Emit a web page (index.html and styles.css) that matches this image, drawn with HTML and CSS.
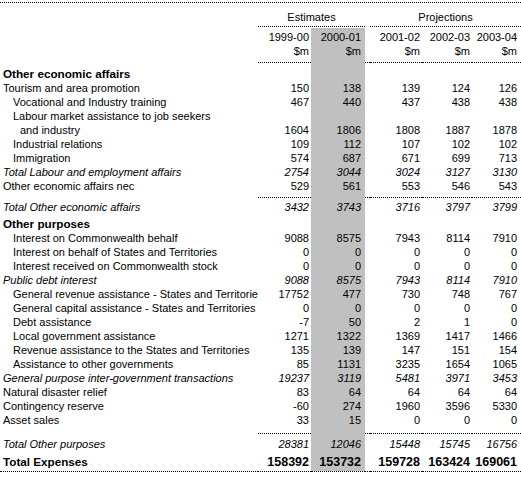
FILE: index.html
```html
<!DOCTYPE html>
<html lang="en">
<head>
    <meta charset="UTF-8">
    <title>Expenses - Other economic affairs and other purposes</title>
    <link rel="stylesheet" href="styles.css">
</head>
<body>

<div class="sheet">
    <table class="budget">
        <colgroup>
            <col class="c-label">
            <col class="c-1">
            <col class="c-2">
            <col class="c-sp">
            <col class="c-3">
            <col class="c-4">
            <col class="c-5">
        </colgroup>
        <thead>
            <tr class="group">
                <th class="label"></th>
                <th colspan="2" class="est">Estimates</th>
                <th class="sp"></th>
                <th colspan="3" class="proj">Projections</th>
            </tr>
            <tr class="years">
                <th class="label"></th>
                <th class="n1">1999-00</th>
                <th class="n2 hi">2000-01</th>
                <th class="sp"></th>
                <th class="n3">2001-02</th>
                <th class="n4">2002-03</th>
                <th class="n5">2003-04</th>
            </tr>
            <tr class="units">
                <th class="label"></th>
                <th class="n1">$m</th>
                <th class="n2 hi">$m</th>
                <th class="sp"></th>
                <th class="n3">$m</th>
                <th class="n4">$m</th>
                <th class="n5">$m</th>
            </tr>
        </thead>
        <tbody id="rows">
            <!-- rows are filled from the data below -->
        </tbody>
    </table>
</div>

<script>
    // type: head = bold section title, sub = italic subtotal, rule = dotted line above totals
    const rows = [
        { label: 'Other economic affairs', type: 'head first' },
        { label: 'Tourism and area promotion', values: [150, 138, 139, 124, 126] },
        { label: 'Vocational and Industry training', indent: 1, values: [467, 440, 437, 438, 438] },
        { label: 'Labour market assistance to job seekers', indent: 1 },
        { label: 'and industry', indent: 2, values: [1604, 1806, 1808, 1887, 1878] },
        { label: 'Industrial relations', indent: 1, values: [109, 112, 107, 102, 102] },
        { label: 'Immigration', indent: 1, values: [574, 687, 671, 699, 713] },
        { label: 'Total Labour and employment affairs', type: 'sub', values: [2754, 3044, 3024, 3127, 3130] },
        { label: 'Other economic affairs nec', values: [529, 561, 553, 546, 543] },
        { type: 'rule' },
        { label: 'Total Other economic affairs', type: 'sub total', values: [3432, 3743, 3716, 3797, 3799] },
        { label: 'Other purposes', type: 'head' },
        { label: 'Interest on Commonwealth behalf', indent: 1, values: [9088, 8575, 7943, 8114, 7910] },
        { label: 'Interest on behalf of States and Territories', indent: 1, values: [0, 0, 0, 0, 0] },
        { label: 'Interest received on Commonwealth stock', indent: 1, values: [0, 0, 0, 0, 0] },
        { label: 'Public debt interest', type: 'sub', values: [9088, 8575, 7943, 8114, 7910] },
        { label: 'General revenue assistance - States and Territories', indent: 1, values: [17752, 477, 730, 748, 767] },
        { label: 'General capital assistance - States and Territories', indent: 1, values: [0, 0, 0, 0, 0] },
        { label: 'Debt assistance', indent: 1, values: [-7, 50, 2, 1, 0] },
        { label: 'Local government assistance', indent: 1, values: [1271, 1322, 1369, 1417, 1466] },
        { label: 'Revenue assistance to the States and Territories', indent: 1, values: [135, 139, 147, 151, 154] },
        { label: 'Assistance to other governments', indent: 1, values: [85, 1131, 3235, 1654, 1065] },
        { label: 'General purpose inter-government transactions', type: 'sub', values: [19237, 3119, 5481, 3971, 3453] },
        { label: 'Natural disaster relief', values: [83, 64, 64, 64, 64] },
        { label: 'Contingency reserve', values: [-60, 274, 1960, 3596, 5330] },
        { label: 'Asset sales', values: [33, 15, 0, 0, 0] },
        { type: 'rule wide' },
        { label: 'Total Other purposes', type: 'sub total', values: [28381, 12046, 15448, 15745, 16756] },
        { label: 'Total Expenses', type: 'grand', values: [158392, 153732, 159728, 163424, 169061] }
    ];

    const body = document.getElementById('rows');

    rows.forEach(row => {
        const tr = document.createElement('tr');
        if (row.type) tr.className = row.type;

        const label = document.createElement('td');
        label.className = 'label indent-' + (row.indent || 0);
        label.textContent = row.label || '';
        tr.appendChild(label);

        const values = row.values || ['', '', '', '', ''];
        values.forEach((v, i) => {
            if (i === 2) {
                const sp = document.createElement('td');
                sp.className = 'sp';
                tr.appendChild(sp);
            }
            const td = document.createElement('td');
            td.className = 'n' + (i + 1) + (i === 1 ? ' hi' : '');
            td.textContent = v;
            tr.appendChild(td);
        });

        body.appendChild(tr);
    });
</script>

</body>
</html>
```

FILE: styles.css
```css
body {
    margin: 0;
    background: #fff;
    color: #000;
    font-family: "Liberation Sans", Arial, sans-serif;
    font-size: 11px;
}

.sheet {
    width: 521px;
    margin-top: 2px;
    border-top: 1px dotted #000; /* top rule, full width */
}

.budget {
    width: 521px;
    border-collapse: separate;
    border-spacing: 0;
    table-layout: fixed;
}

.c-label { width: 258px; }
.c-1 { width: 53px; }
.c-2 { width: 54px; }
.c-sp { width: 5px; }
.c-3 { width: 52px; }
.c-4 { width: 50px; }
.c-5 { width: 49px; }

.budget th,
.budget td {
    padding: 0;
    line-height: 14px;
    font-weight: normal;
    white-space: nowrap;
    overflow: hidden;
    text-align: right;
}

.budget .label {
    text-align: left;
    padding-left: 3px;
}

.indent-1 { padding-left: 13px !important; }
.indent-2 { padding-left: 20px !important; }

.n1, .n3, .n4 { padding-right: 2px !important; }
.n2, .n5 { padding-right: 4px !important; }

/* highlighted column (budget year) */
.hi {
    background-color: #c0c0c0;
    background-clip: padding-box;
}

/* header rows */
.group th {
    padding-top: 7px;
    padding-bottom: 2px;
}

.group .est,
.group .proj {
    text-align: center;
    border-bottom: 1px dotted #000;
}

.years th {
    padding-top: 3px;
}

.years .hi {
    padding-top: 2px;
    border-top: 1px solid #fff;
}

.units th {
    padding-bottom: 4px;
    border-bottom: 1px dotted #000;
}

.units th.label {
    border-bottom: none;
}

.units th.hi {
    border-bottom: 1px solid #c0c0c0;
}

/* body rows */
tr.head td {
    font-weight: bold;
    font-size: 11.7px;
    padding-top: 3px;
}

tr.head.first td {
    padding-top: 4px;
}

tr.sub td {
    font-style: italic;
}

tr.total td {
    padding-top: 2px;
}

tr.sub.total + tr.head td {
    padding-top: 3px;
}

tr.rule td {
    padding-top: 4px;
    line-height: 0;
    border-bottom: 1px dotted #000;
}

tr.rule.wide td {
    padding-top: 6px;
}

tr.rule td.label {
    border-bottom: none;
}

tr.rule td.hi {
    border-bottom: 1px solid #c0c0c0;
}

tr.rule.wide + tr.total td {
    padding-top: 3px;
}

tr.grand td {
    font-weight: bold;
    font-size: 12.5px;
    padding-top: 4px;
    padding-bottom: 2px;
    border-bottom: 1px dotted #000;
}

tr.grand td.label {
    font-size: 11.7px;
}
```
